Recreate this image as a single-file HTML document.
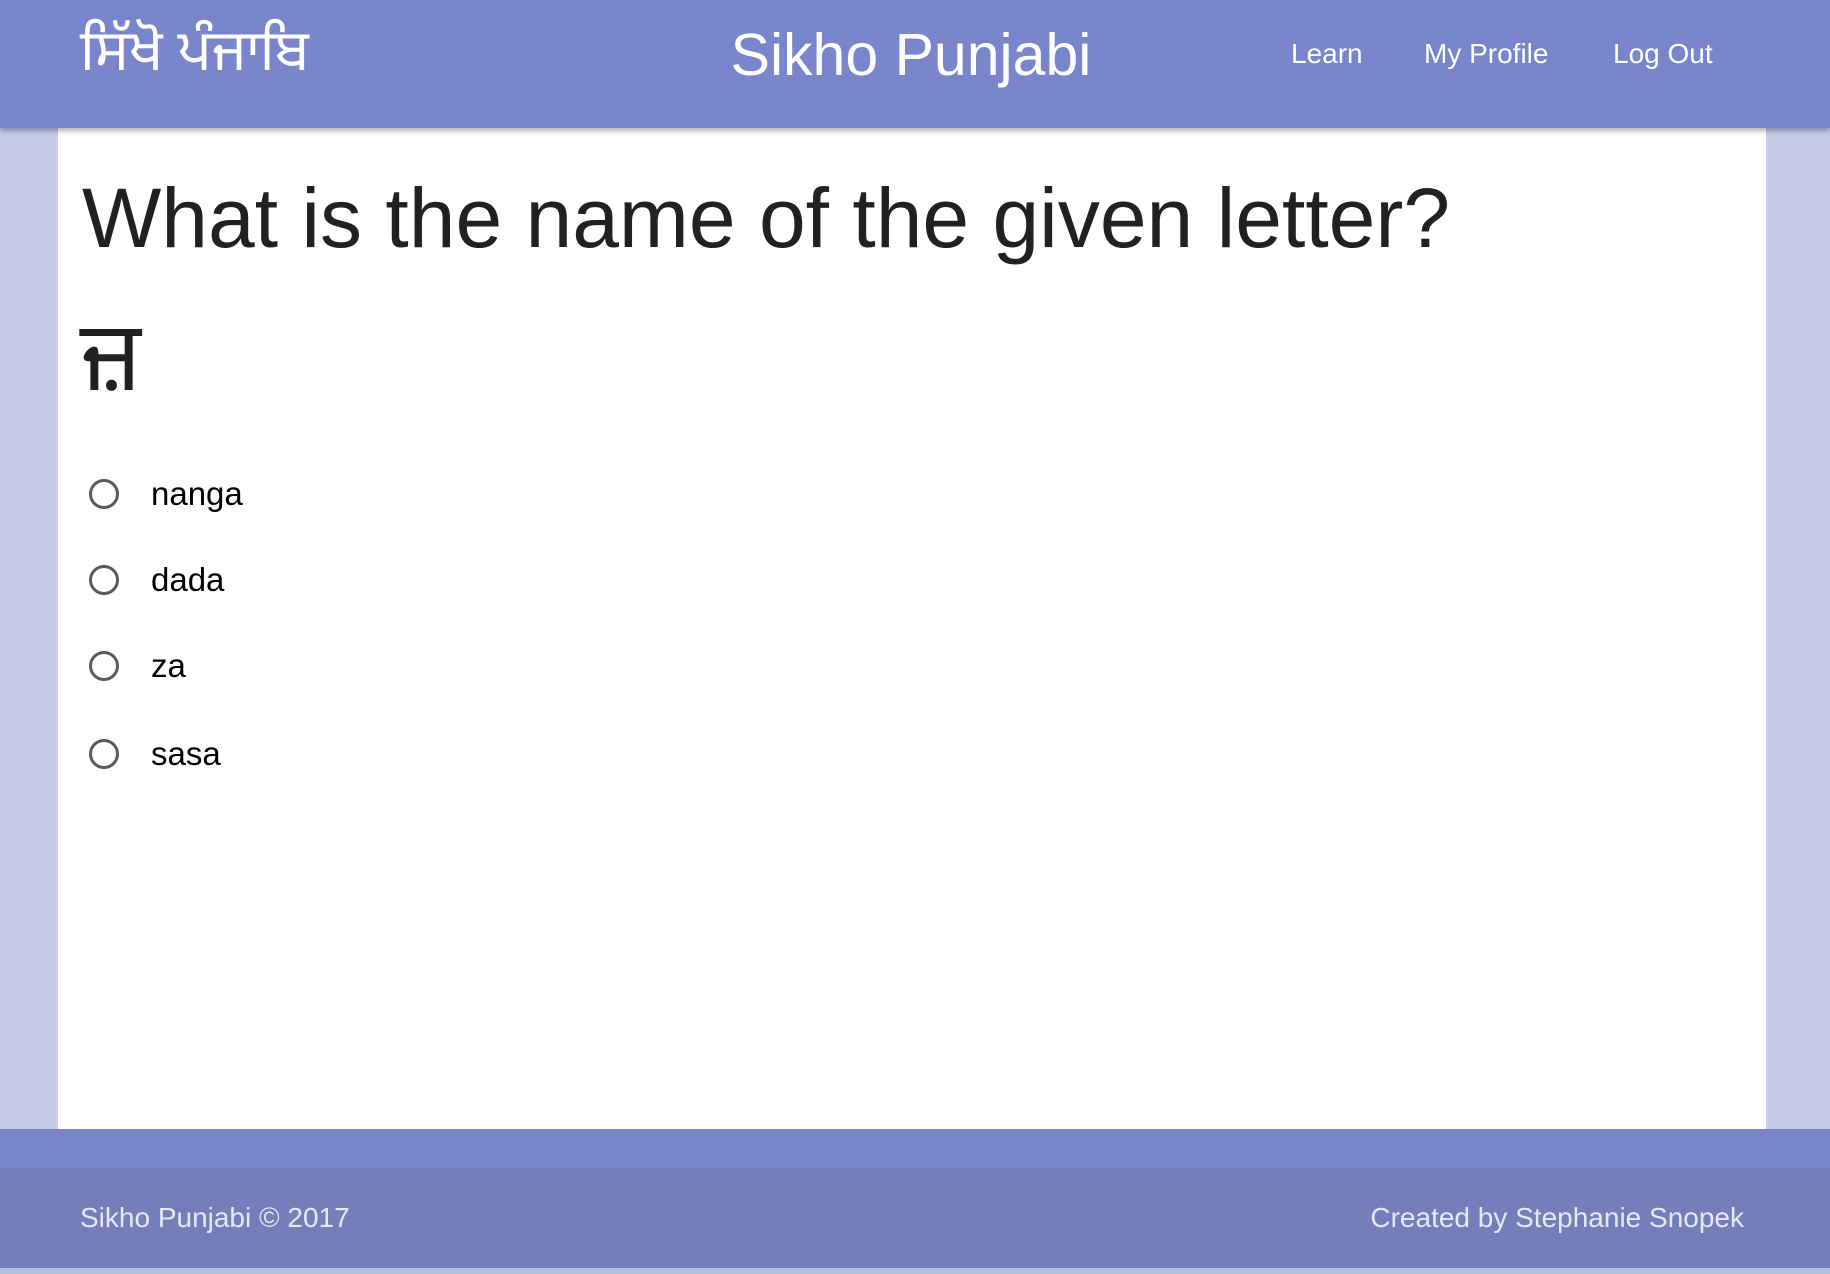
<!DOCTYPE html>
<html><head><meta charset="utf-8"><style>
*{margin:0;padding:0;box-sizing:border-box}
html,body{width:1830px;height:1274px;overflow:hidden;background:#C5CAE9;font-family:"Liberation Sans",sans-serif}
.hdr{position:absolute;left:0;top:0;width:1830px;height:128px;background:#7986CB;box-shadow:0 3px 5px rgba(0,0,0,.3);z-index:2;color:#fff}
.logo{position:absolute;left:80px;top:22px;font-size:57px;font-family:"Noto Sans Gurmukhi","Lohit Gurmukhi","Liberation Sans",sans-serif;line-height:70px}
.title{position:absolute;left:0;width:1822px;text-align:center;top:20px;font-size:59px;line-height:70px}
.nav{position:absolute;top:36px;font-size:28px;line-height:36px}
.main{position:absolute;left:58px;top:128px;width:1708px;height:1001px;background:#fff}
h1{position:absolute;left:24px;top:40px;font-weight:normal;font-size:84px;color:#212121;line-height:100px;white-space:nowrap}
.letter{position:absolute;left:22px;top:178px;font-size:98px;color:#212121;font-family:"Noto Sans Gurmukhi","Lohit Gurmukhi","Liberation Sans",sans-serif;line-height:120px}
.opt{position:absolute;left:31px;height:40px}
.opt .c{position:absolute;left:0;top:5px;width:30px;height:30px;border:3.5px solid #5a5a5a;border-radius:50%}
.opt .t{position:absolute;left:62px;top:0;font-size:33px;line-height:40px;color:#000;white-space:nowrap}
.fband{position:absolute;left:0;top:1129px;width:1830px;height:39px;background:#7986CB}
.foot{position:absolute;left:0;top:1168px;width:1830px;height:100px;background:#737EBA;color:#e6e8f5;font-size:28px}
.fbot{position:absolute;left:0;top:1268px;width:1830px;height:6px;background:#B8BEDC}
</style></head><body>
<div class="hdr">
<div class="logo">ਸਿੱਖੋ ਪੰਜਾਬਿ</div>
<div class="title">Sikho Punjabi</div>
<div class="nav" style="left:1291px">Learn</div>
<div class="nav" style="left:1424px">My Profile</div>
<div class="nav" style="left:1613px">Log Out</div>
</div>
<div class="main">
<h1>What is the name of the given letter?</h1>
<div class="letter">ਜ਼</div>
<div class="opt" style="top:346px"><div class="c"></div><div class="t">nanga</div></div>
<div class="opt" style="top:432px"><div class="c"></div><div class="t">dada</div></div>
<div class="opt" style="top:518px"><div class="c"></div><div class="t">za</div></div>
<div class="opt" style="top:606px"><div class="c"></div><div class="t">sasa</div></div>
</div>
<div class="fband"></div>
<div class="foot">
<div style="position:absolute;left:80px;top:32px;line-height:36px">Sikho Punjabi © 2017</div>
<div style="position:absolute;right:86px;top:32px;line-height:36px">Created by Stephanie Snopek</div>
</div>
<div class="fbot"></div>
</body></html>
